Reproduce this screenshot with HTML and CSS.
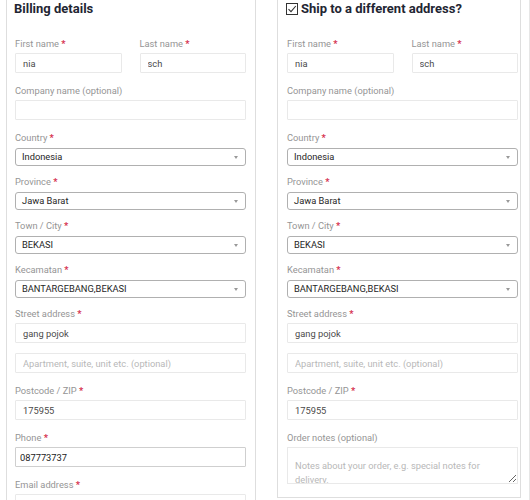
FILE: index.html
```html
<!DOCTYPE html>
<html lang="en">
<head>
<meta charset="utf-8">
<title>Checkout</title>
<link rel="stylesheet" href="styles.css">
</head>
<body>
<div class="page">
  <section class="panel panel-left">
    <h3 class="heading">Billing details</h3>
    <div class="row">
      <div class="field"><label>First name <abbr>*</abbr></label><input class="txt" type="text" value="nia"></div>
      <div class="field"><label>Last name <abbr>*</abbr></label><input class="txt" type="text" value="sch"></div>
    </div>
    <div class="field"><label>Company name (optional)</label><input class="txt" type="text" value=""></div>
    <div class="field sel"><label>Country <abbr>*</abbr></label><div class="select">Indonesia</div></div>
    <div class="field sel"><label>Province <abbr>*</abbr></label><div class="select">Jawa Barat</div></div>
    <div class="field sel"><label>Town / City <abbr>*</abbr></label><div class="select">BEKASI</div></div>
    <div class="field sel"><label>Kecamatan <abbr>*</abbr></label><div class="select">BANTARGEBANG,BEKASI</div></div>
    <div class="field street"><label>Street address <abbr>*</abbr></label><input class="txt" type="text" value="gang pojok"></div>
    <div class="field"><input class="txt" type="text" placeholder="Apartment, suite, unit etc. (optional)"></div>
    <div class="field"><label>Postcode / ZIP <abbr>*</abbr></label><input class="txt" type="text" value="175955"></div>
    <div class="field"><label>Phone <abbr>*</abbr></label><input class="txt focus" type="text" value="087773737"></div>
    <div class="field"><label>Email address <abbr>*</abbr></label><input class="txt" type="text" value=""></div>
  </section>
  <section class="panel panel-right">
    <h3 class="heading ship">
      <svg class="check" width="12" height="12" viewBox="0 0 12 12" aria-hidden="true"><rect x="0.5" y="0.5" width="11" height="11" fill="#fff" stroke="#333" stroke-width="1"/><path d="M2.5 6.2 L5 8.6 L9.8 3" fill="none" stroke="#333" stroke-width="1.1"/></svg>
      <span>Ship to a different address?</span>
    </h3>
    <div class="row">
      <div class="field"><label>First name <abbr>*</abbr></label><input class="txt" type="text" value="nia"></div>
      <div class="field"><label>Last name <abbr>*</abbr></label><input class="txt" type="text" value="sch"></div>
    </div>
    <div class="field"><label>Company name (optional)</label><input class="txt" type="text" value=""></div>
    <div class="field sel"><label>Country <abbr>*</abbr></label><div class="select">Indonesia</div></div>
    <div class="field sel"><label>Province <abbr>*</abbr></label><div class="select">Jawa Barat</div></div>
    <div class="field sel"><label>Town / City <abbr>*</abbr></label><div class="select">BEKASI</div></div>
    <div class="field sel"><label>Kecamatan <abbr>*</abbr></label><div class="select">BANTARGEBANG,BEKASI</div></div>
    <div class="field street"><label>Street address <abbr>*</abbr></label><input class="txt" type="text" value="gang pojok"></div>
    <div class="field"><input class="txt" type="text" placeholder="Apartment, suite, unit etc. (optional)"></div>
    <div class="field"><label>Postcode / ZIP <abbr>*</abbr></label><input class="txt" type="text" value="175955"></div>
    <div class="field notes"><label>Order notes (optional)</label><textarea class="area" placeholder="Notes about your order, e.g. special notes for delivery."></textarea></div>
  </section>
</div>
</body>
</html>
```
FILE: styles.css
```css
* { box-sizing: border-box; }
html, body { margin: 0; padding: 0; background: #fff; }
body { font-family: Roboto, "Liberation Sans", sans-serif; }

.page {
  display: flex;
  align-items: flex-start;
  gap: 21px;
  padding-left: 6px;
  width: 530px;
  height: 500px;
  overflow: hidden;
  border-right: 1px solid #e6e6e6;
}

.panel {
  border: 1px solid #dedede;
  border-top: none;
  background: #fff;
}
.panel-left { width: 250px; padding: 0 9px 12px 8px; }
.panel-right { width: 244px; padding: 0 2px 13px 9px; }

.heading {
  margin: 0 0 19px -1px;
  font-size: 13px;
  line-height: 18px;
  font-weight: 700;
  color: #1f2633;
  display: flex;
  align-items: center;
}
.heading.ship { margin-left: -1px; }
.check { flex: none; margin-right: 3px; margin-top: -1px; }

.row { display: grid; grid-template-columns: 1fr 1fr; gap: 18px; }

.field { margin-bottom: 11px; }
.field label {
  display: block;
  font-size: 9.3px;
  line-height: 14px;
  color: #959595;
  margin-bottom: 2px;
}
.field abbr { color: #d6334f; text-decoration: none; font-weight: 700; }
.field.sel { margin-bottom: 9px; }
.field.sel label { margin-bottom: 3px; }
.field.street { margin-bottom: 10px; }

.txt {
  display: block;
  width: 100%;
  height: 20px;
  margin: 0;
  border: 1px solid #e9e9e9;
  border-radius: 1px;
  padding: 0 7px;
  font-family: Roboto, "Liberation Sans", sans-serif;
  font-size: 9.3px;
  color: #4a4a4a;
  background: #fff;
  outline: none;
}
.txt::placeholder { color: #b8b8b8; }
.txt.focus { border-color: #cfcfcf; color: #222; padding-left: 4px; }

.select {
  position: relative;
  height: 18px;
  border: 1px solid #b0b0b0;
  border-radius: 3px;
  padding: 0 6px;
  font-size: 9.3px;
  line-height: 16px;
  color: #262626;
  background: #fff;
}
.select::after {
  content: "";
  position: absolute;
  right: 7px;
  top: 7px;
  border-left: 2px solid transparent;
  border-right: 2px solid transparent;
  border-top: 3px solid #999;
}

.field.notes { margin-bottom: 0; }
.area {
  display: block;
  width: 100%;
  height: 37px;
  margin: 0;
  border: 1px solid #e9e9e9;
  padding: 11px 7px 2px;
  font-family: Roboto, "Liberation Sans", sans-serif;
  font-size: 9.3px;
  line-height: 14px;
  color: #444;
  resize: vertical;
  overflow: hidden;
  outline: none;
}
.area::placeholder { color: #b8b8b8; }
```
